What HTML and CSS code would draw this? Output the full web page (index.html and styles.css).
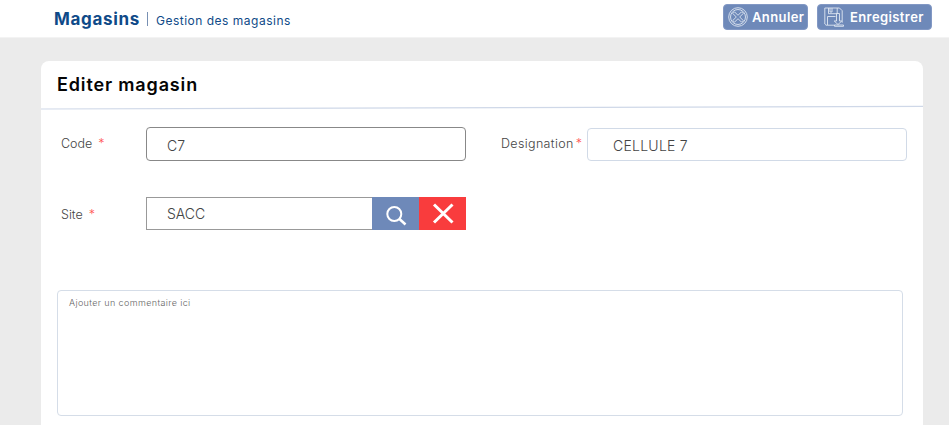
FILE: index.html
```html
<!DOCTYPE html>
<html lang="fr">
<head>
<meta charset="utf-8">
<title>Magasins</title>
<link rel="stylesheet" href="styles.css">
</head>
<body>
<header class="topbar">
  <h1 class="brand"><span>Magasins</span></h1>
  <span class="divider"></span>
  <span class="subtitle">Gestion des magasins</span>
  <div class="actions">
    <button class="btn btn-cancel" type="button">
      <svg width="20" height="20" viewBox="0 0 20 20" fill="none" stroke="currentColor" stroke-width=".9"><circle cx="10" cy="10" r="9.3"/><circle cx="10" cy="10" r="7.5"/><path d="M6.5 4.8 10 8.3l3.500-3.500 1.700 1.700L11.700 10l3.500 3.500-1.700 1.700L10 11.700l-3.500 3.500-1.700-1.700L8.300 10 4.800 6.500z"/></svg>
      <span>Annuler</span>
    </button>
    <button class="btn btn-save" type="button">
      <svg width="20" height="20" viewBox="0 0 20 20" fill="none" stroke="currentColor" stroke-width=".9"><path d="M10.500 18.200H2L.8 17V1h14.700l2.700 2.700v12M4.500 1v5.700h8.700V1M6 1v4h2V1M3.500 18V9.500h8"/><path d="M12.500 6.500h3v7.500h2.300L14 17.500 10.200 14h2.300z"/><path d="M10.500 18h9v1.300h-9z"/></svg>
      <span>Enregistrer</span>
    </button>
  </div>
</header>
<main class="card">
  <h2 class="card-title"><span>Editer magasin</span></h2>
  <svg class="rule" width="882" height="5" viewBox="0 0 882 5"><path d="M0 4 882 1.300" stroke="#cfd8e8" stroke-width="1.200"/></svg>
  <form class="form">
    <div class="row">
      <label class="label"><span>Code</span><i>*</i></label>
      <div class="field field-dark"><span>C7</span></div>
      <label class="label label-right"><span>Designation</span><i>*</i></label>
      <div class="field field-light"><span>CELLULE 7</span></div>
    </div>
    <div class="row row-site">
      <label class="label"><span>Site</span><i>*</i></label>
      <div class="field picker">
        <span>SACC</span>
        <div class="pick search"><svg width="47" height="33" viewBox="0 0 47 33" fill="none" stroke="#fff"><circle cx="22.300" cy="17" r="7" stroke-width="2"/><path d="m27.500 22 6 5.500" stroke-width="2.500"/></svg></div>
        <div class="pick clear"><svg width="47" height="33" viewBox="0 0 47 33" fill="none" stroke="#fff" stroke-width="3"><path d="m15 7.500 18.500 18M33.500 7.500 15 25.500"/></svg></div>
      </div>
    </div>
    <div class="comment"><span>Ajouter un commentaire ici</span></div>
  </form>
</main>
</body>
</html>
```
FILE: styles.css
```css
* { box-sizing: border-box; }
body {
  margin: 0;
  height: 425px;
  overflow: hidden;
  background: #ebebeb;
  font-family: Inter, "Liberation Sans", sans-serif;
  color: #444;
}
h1, h2 { margin: 0; }
.topbar {
  height: 38px;
  padding: 0 17px 0 54px;
  display: flex;
  align-items: center;
  background: #fff;
  border-bottom: 1px solid #f3f3f3;
  color: #0f4a88;
}
.brand { width: 93px; font-size: 17px; line-height: 38px; font-weight: 700; letter-spacing: .67px; }
.divider { width: 1px; height: 14px; margin-top: 1px; background: #7890b3; }
.subtitle { margin: 3px 0 0 8px; font-size: 12px; font-weight: 400; letter-spacing: .5px; }
.actions { display: flex; gap: 9px; margin: -4px 0 0 auto; }
.btn {
  height: 26px;
  padding: 0;
  display: flex;
  align-items: center;
  border: 1px solid #8298c4;
  border-radius: 4px;
  background: #6e89b9;
  color: #fff;
  font: 600 13px/24px Inter, "Liberation Sans", sans-serif;
  letter-spacing: .4px;
  white-space: nowrap;
}
.btn svg { flex: none; color: #dfe6f2; }
.btn-cancel { width: 85px; padding-left: 4px; gap: 4px; }
.btn-save { width: 115px; padding-left: 6px; gap: 6px; }
.card {
  width: 882px;
  height: 380px;
  margin: 23px 0 0 41px;
  background: #fff;
  border-radius: 8px 8px 0 0;
}
.card-title { height: 44px; padding-left: 16px; font-size: 18px; line-height: 47px; font-weight: 600; letter-spacing: .85px; color: #050505; }
.rule { display: block; }
.form { padding: 17px 16px 0; }
.row { display: flex; height: 34px; }
.label { width: 89px; padding-left: 4px; display: flex; font-size: 12.500px; font-weight: 300; line-height: 34px; }
.label i { margin-left: 6px; font-style: normal; color: #ff5555; }
.label-right { width: 121px; padding-left: 35px; letter-spacing: .35px; }
.label-right i { margin-left: 2px; }
.field { width: 320px; height: 34px; padding-left: 20px; font-size: 14px; font-weight: 300; line-height: 35px; }
.field-dark { border: 1px solid #888; border-radius: 4px; }
.field-light { height: 33px; margin-top: 1px; padding-left: 25px; border: 1px solid #d1dae7; border-radius: 4px; line-height: 34px; letter-spacing: .25px; }
.row-site { height: 33px; margin-top: 36px; }
.row-site .label { line-height: 36px; }
.picker { display: flex; height: 33px; border: 1px solid #999; line-height: 32px; }
.pick { height: 33px; width: 47px; margin-top: -1px; }
.pick svg { display: block; }
.search { margin-left: auto; background: #6e89b9; }
.clear { margin-right: -1px; background: #f93c3d; }
.comment { width: 846px; height: 126px; margin-top: 60px; padding: 5px 11px; border: 1px solid #d5dde8; border-radius: 4px; font-size: 9px; font-weight: 300; line-height: 13px; letter-spacing: .37px; color: #666; }
```
